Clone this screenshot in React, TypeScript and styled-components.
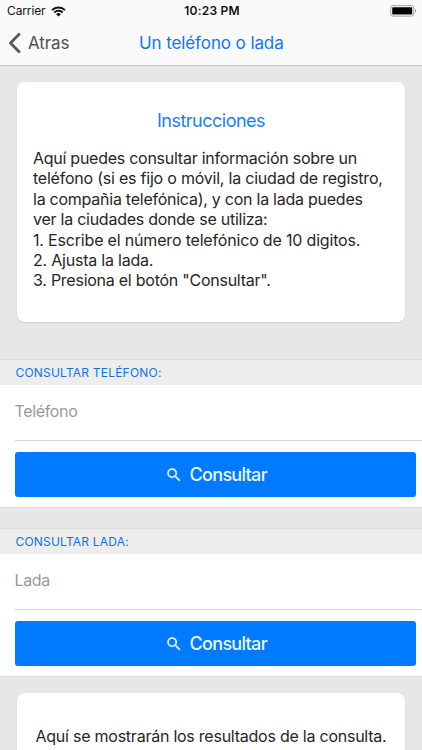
import React from "react";
import styled, { createGlobalStyle } from "styled-components";

const GlobalStyle = createGlobalStyle`
  * { box-sizing: border-box; }
  html, body { margin: 0; padding: 0; overflow: hidden; }
  body { font-family: Inter, "Liberation Sans", sans-serif; background: #e7e7e7; }
`;

const Screen = styled.div`
  width: 422px;
  height: 750px;
  overflow: hidden;
  display: flex;
  flex-direction: column;
  background: #e7e7e7;
  color: #262626;
`;

const Header = styled.header`
  flex: none;
  height: 66px;
  background: #fafafa;
  border-bottom: 1px solid #c4c4c4;
`;

const StatusBar = styled.div`
  height: 22px;
  padding: 0 5px 0 7px;
  display: grid;
  grid-template-columns: 1fr auto 1fr;
  align-items: center;
  font-size: 12px;
  line-height: 22px;
  color: #111;
`;

const Carrier = styled.div`
  display: flex;
  align-items: center;
  gap: 5px;
  letter-spacing: -0.12px;
`;

const Clock = styled.div`
  font-size: 12px;
  font-weight: 600;
  letter-spacing: 0.22px;
`;

const Battery = styled.svg`
  justify-self: end;
`;

const NavBar = styled.div`
  height: 42px;
  padding-left: 8px;
  display: grid;
  grid-template-columns: 131px 1fr;
  align-items: center;
`;

const BackButton = styled.button`
  display: flex;
  align-items: center;
  gap: 7px;
  padding: 0;
  border: 0;
  background: none;
  font: 400 17px Inter, sans-serif;
  letter-spacing: -0.1px;
  color: #505050;
`;

const NavTitle = styled.h1`
  margin: 0;
  font-size: 17px;
  font-weight: 400;
  letter-spacing: -0.1px;
  color: #0f78f2;
  white-space: nowrap;
`;

const Card = styled.section<{ $height: number }>`
  flex: none;
  height: ${(p) => p.$height}px;
  margin: 0 17px;
  padding: 28px 16px 0;
  border-radius: 8px;
  background: #fff;
  box-shadow: 0 1px 2px rgba(0, 0, 0, 0.1);
`;

const Instructions = styled(Card)`
  margin-top: 16px;
`;

const Results = styled(Card)`
  margin-top: 17px;
  padding: 33px 18.5px 0;
`;

const CardTitle = styled.h2`
  margin: 0 0 17px;
  text-align: center;
  font-size: 18px;
  line-height: 21px;
  font-weight: 400;
  letter-spacing: -0.5px;
  color: #1a7ff5;
`;

const Line = styled.span<{ $spacing: number }>`
  display: block;
  font-size: 16px;
  line-height: 20.4px;
  letter-spacing: ${(p) => p.$spacing}px;
  white-space: nowrap;
`;

const Group = styled.form<{ $top: number }>`
  flex: none;
  height: 148px;
  margin-top: ${(p) => p.$top}px;
  background: #fff;
  box-shadow: 0 1px 0 #dedede;
`;

const GroupHeader = styled.div`
  height: 26px;
  padding-left: 15.5px;
  border-top: 1px solid #dcdcdc;
  background: #ededed;
  font-size: 12px;
  font-weight: 400;
  line-height: 25px;
  letter-spacing: 0.2px;
  color: #0f72e8;
`;

const Field = styled.label`
  display: block;
  height: 56px;
  margin-left: 14.5px;
  border-bottom: 1px solid #d5d5d5;
`;

const Input = styled.input`
  display: block;
  width: 100%;
  height: 52px;
  padding: 0;
  border: 0;
  outline: 0;
  background: transparent;
  font: 400 16px Inter, sans-serif;
  letter-spacing: -0.35px;
  &::placeholder { color: #999; opacity: 1; }
`;

const SubmitButton = styled.button`
  display: flex;
  align-items: center;
  justify-content: center;
  gap: 7px;
  width: 401px;
  height: 45px;
  margin: 11px 0 0 14.5px;
  padding: 0 0 0 1.5px;
  border: 0;
  border-radius: 3px;
  background: #007aff;
  font: 500 18px Inter, sans-serif;
  letter-spacing: -0.7px;
  color: #eaf7ff;
`;

const instructions: [string, number][] = [
  ["Aquí puedes consultar información sobre un", -0.26],
  ["teléfono (si es fijo o móvil, la ciudad de registro,", -0.22],
  ["la compañia telefónica), y con la lada puedes", -0.25],
  ["ver la ciudades donde se utiliza:", -0.25],
  ["1. Escribe el número telefónico de 10 digitos.", -0.18],
  ["2. Ajusta la lada.", -0.22],
  ['3. Presiona el botón "Consultar".', -0.25],
];

function WifiIcon() {
  return (
    <svg width="15" height="11" viewBox="0 0 15 11" fill="none" stroke="#111" strokeWidth="2">
      <path d="M1 4.1a9.3 9.3 0 0 1 13 0M3.3 6.5a6 6 0 0 1 8.4 0" />
      <path d="M5.1 8.2a3.4 3.4 0 0 1 4.8 0L7.5 10.6z" fill="#111" stroke="none" />
    </svg>
  );
}

function BatteryIcon() {
  return (
    <Battery width="27" height="12" viewBox="0 0 27 12">
      <rect x="0.7" y="0.7" width="23" height="10.4" rx="2.3" fill="#fff" stroke="#a0a0a0" />
      <rect x="2.2" y="2.2" width="20" height="7.4" rx="0.8" fill="#000" />
      <path d="M25 4.1c1.5.5 1.5 3.1 0 3.6z" fill="#929292" />
    </Battery>
  );
}

function BackIcon() {
  return (
    <svg width="13" height="22" viewBox="0 0 13 22" fill="none" stroke="#595959" strokeWidth="2.8">
      <path d="M11.8 1.5 2.5 11l9.3 9.5" />
    </svg>
  );
}

function SearchIcon() {
  return (
    <svg width="18" height="18" viewBox="0 0 24 24" fill="currentColor" stroke="currentColor" strokeWidth="0.3">
      <path d="M15.5 14h-.79l-.28-.27A6.47 6.47 0 0 0 16 9.5 6.5 6.5 0 1 0 9.5 16c1.61 0 3.09-.59 4.23-1.57l.27.28v.79l5 4.99L20.49 19l-4.99-5zm-6 0C7.01 14 5 11.99 5 9.5S7.01 5 9.5 5 14 7.01 14 9.5 11.99 14 9.5 14z" />
    </svg>
  );
}

function LookupForm({ title, placeholder, top }: { title: string; placeholder: string; top: number }) {
  return (
    <Group $top={top} onSubmit={(e) => e.preventDefault()}>
      <GroupHeader>{title}</GroupHeader>
      <Field>
        <Input placeholder={placeholder} aria-label={placeholder} />
      </Field>
      <SubmitButton>
        <SearchIcon />
        Consultar
      </SubmitButton>
    </Group>
  );
}

export default function App() {
  return (
    <>
      <GlobalStyle />
      <Screen>
        <Header>
          <StatusBar>
            <Carrier>
              Carrier
              <WifiIcon />
            </Carrier>
            <Clock>10:23 PM</Clock>
            <BatteryIcon />
          </StatusBar>
          <NavBar>
            <BackButton>
              <BackIcon />
              Atras
            </BackButton>
            <NavTitle>Un teléfono o lada</NavTitle>
          </NavBar>
        </Header>
        <Instructions $height={240}>
          <CardTitle>Instrucciones</CardTitle>
          {instructions.map(([text, spacing]) => (
            <Line key={text} $spacing={spacing}>{text}</Line>
          ))}
        </Instructions>
        <LookupForm title="CONSULTAR TELÉFONO:" placeholder="Teléfono" top={37} />
        <LookupForm title="CONSULTAR LADA:" placeholder="Lada" top={21} />
        <Results $height={120}>
          <Line $spacing={-0.24}>Aquí se mostrarán los resultados de la consulta.</Line>
        </Results>
      </Screen>
    </>
  );
}
